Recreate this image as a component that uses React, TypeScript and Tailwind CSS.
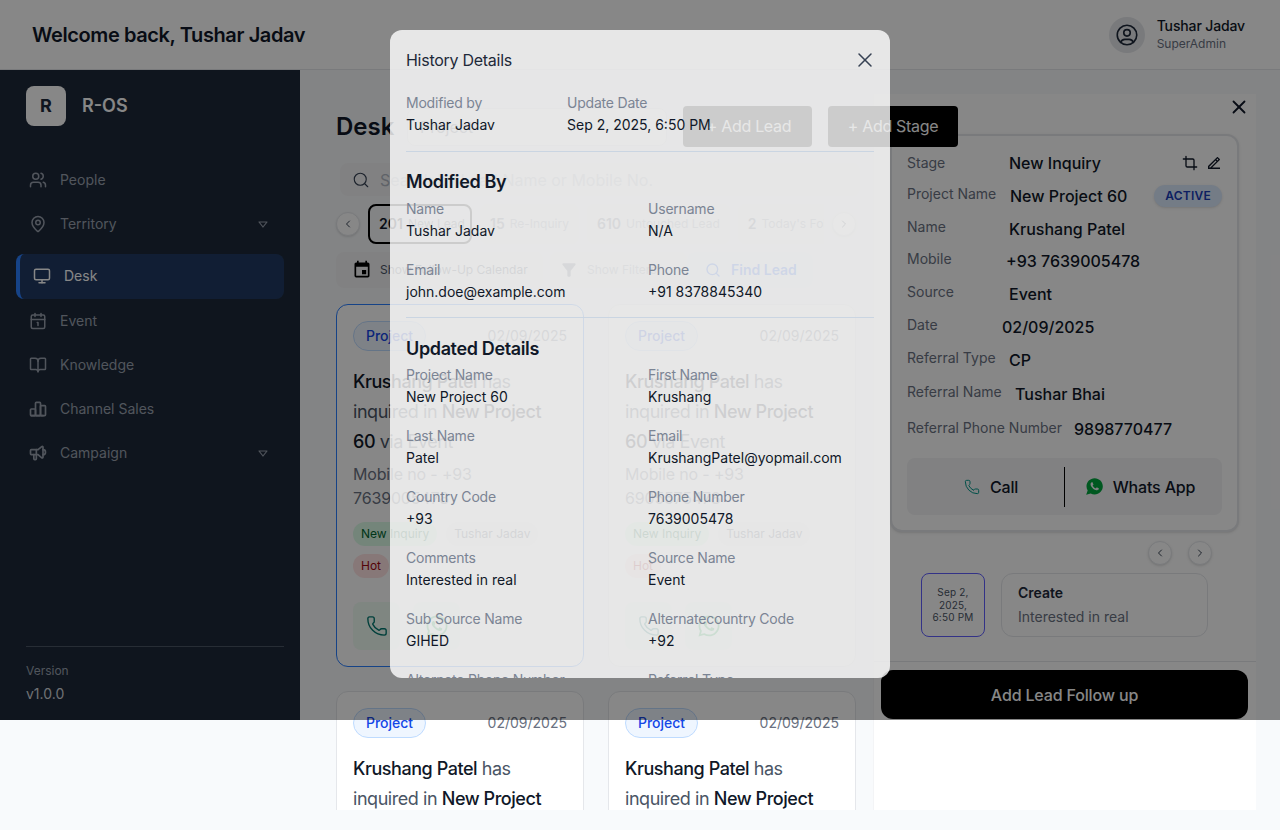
import {
  BookOpen,
  Calendar1,
  ChevronLeft,
  ChevronRight,
  Crop,
  MapPin,
  Monitor,
  Phone,
  Search,
  Users,
  X,
  type LucideIcon,
} from "lucide-react";
import { FaWhatsapp } from "react-icons/fa";
import { IoLogoWhatsapp } from "react-icons/io";
import { MdEvent, MdFilterAlt } from "react-icons/md";
import { RiEdit2Line } from "react-icons/ri";
import { TbChartBar, TbSpeakerphone, TbUserCircle } from "react-icons/tb";
import type { ComponentType } from "react";

interface NavItem {
  label: string;
  icon: LucideIcon | ComponentType<{ size?: number; className?: string }>;
  size: number;
  iconClass: string;
  caret?: boolean;
  active?: boolean;
}

const navItems: NavItem[] = [
  { label: "People", icon: Users, size: 18, iconClass: "shrink-0" },
  { label: "Territory", icon: MapPin, size: 18, iconClass: "shrink-0", caret: true },
  { label: "Desk", icon: Monitor, size: 18, iconClass: "shrink-0", active: true },
  { label: "Event", icon: Calendar1, size: 18, iconClass: "shrink-0" },
  { label: "Knowledge", icon: BookOpen, size: 18, iconClass: "shrink-0" },
  { label: "Channel Sales", icon: TbChartBar, size: 20, iconClass: "-mx-px shrink-0" },
  { label: "Campaign", icon: TbSpeakerphone, size: 20, iconClass: "-mx-px shrink-0", caret: true },
];

const tabs = [
  { count: "15", label: "Re-Inquiry" },
  { count: "610", label: "Untouched Lead" },
  { count: "2", label: "Today's Fol" },
];

const leadRows = [
  { label: "Stage", value: "New Inquiry", row: "h-[33px]", cell: "w-[102px]" },
  { label: "Project Name", value: "New Project 60", row: "h-[33px]", cell: "mb-1 w-[103px]" },
  { label: "Name", value: "Krushang Patel", row: "h-[33px]", cell: "mb-1 w-[102px]" },
  { label: "Mobile", value: "+93 7639005478", row: "h-[32px]", cell: "mb-1 w-[99px]" },
  { label: "Source", value: "Event", row: "h-[33px]", cell: "mb-1 w-[102px]" },
  { label: "Date", value: "02/09/2025", row: "h-[33px]", cell: "mb-1 w-[95px]" },
  { label: "Referral Type", value: "CP", row: "h-[33px]", cell: "mb-1 w-[102px]" },
  { label: "Referral Name", value: "Tushar Bhai", row: "h-[35px]", cell: "mb-1 w-[108px]" },
  { label: "Referral Phone Number", value: "9898770477", row: "h-[35px]", cell: "mb-0.5 w-[167px]" },
];

const modifiedBy = [
  { label: "Name", value: "Tushar Jadav" },
  { label: "Username", value: "N/A" },
  { label: "Email", value: "john.doe@example.com" },
  { label: "Phone", value: "+91 8378845340" },
];

const updatedDetails = [
  { label: "Project Name", value: "New Project 60" },
  { label: "First Name", value: "Krushang" },
  { label: "Last Name", value: "Patel" },
  { label: "Email", value: "KrushangPatel@yopmail.com" },
  { label: "Country Code", value: "+93" },
  { label: "Phone Number", value: "7639005478" },
  { label: "Comments", value: "Interested in real" },
  { label: "Source Name", value: "Event" },
  { label: "Sub Source Name", value: "GIHED" },
  { label: "Alternatecountry Code", value: "+92" },
  { label: "Alternate Phone Number", value: "9898770477" },
  { label: "Referral Type", value: "CP" },
];

function Field({ label, value }: { label: string; value: string }) {
  return (
    <div className="flex flex-col gap-0.5 text-sm leading-5">
      <span className="tracking-[-0.015em] text-[#7b8494]">{label}</span>
      <span className="text-gray-900">{value}</span>
    </div>
  );
}

function RoundButton({ icon: Icon }: { icon: LucideIcon }) {
  return (
    <button className="flex h-6 w-6 shrink-0 items-center justify-center rounded-full border border-gray-200 bg-white shadow-sm">
      <Icon size={12} className="text-gray-700" />
    </button>
  );
}

function Caret() {
  return (
    <svg width="10" height="7" viewBox="0 0 10 7" className="mr-[3px]" fill="none">
      <path d="M1 1h8L5 6z" stroke="currentColor" strokeWidth="1.2" strokeLinejoin="round" />
    </svg>
  );
}

function Sidebar() {
  return (
    <aside className="flex h-[650px] w-[300px] shrink-0 flex-col bg-gray-800">
      <div className="flex items-center gap-4 px-[26px] pt-4">
        <div className="flex h-10 w-10 items-center justify-center rounded-lg bg-white text-lg font-bold text-gray-800">
          R
        </div>
        <span className="text-lg font-semibold text-white">R-OS</span>
      </div>
      <nav className="mt-8 flex flex-col px-4">
        {navItems.map((item) => {
          const Icon = item.icon;
          return (
            <div
              key={item.label}
              className={
                item.active
                  ? "mt-2 flex h-[45px] items-center gap-[13px] rounded-lg border-l-4 border-blue-500 bg-blue-500/20 pb-px pl-[13px] text-sm text-white"
                  : "flex h-11 items-center gap-[13px] px-[13px] text-sm text-gray-400"
              }
            >
              <Icon size={item.size} className={item.iconClass} />
              <span className="flex-1">{item.label}</span>
              {item.caret && <Caret />}
            </div>
          );
        })}
      </nav>
      <div className="ml-[26px] mr-4 mt-auto h-[74px] border-t border-gray-600 pt-4">
        <div className="text-xs leading-4 text-gray-400">Version</div>
        <div className="mt-[5px] text-sm leading-5 text-gray-300">v1.0.0</div>
      </div>
    </aside>
  );
}

function LeadCard({ mobile, selected }: { mobile: string; selected?: boolean }) {
  return (
    <div
      className={
        selected
          ? "rounded-xl border border-blue-500 bg-white px-4 py-4"
          : "rounded-xl border border-gray-200 bg-white px-4 py-4"
      }
    >
      <div className="flex items-center justify-between">
        <span className="flex h-[30px] w-[73px] items-center justify-center rounded-full border border-blue-200 bg-blue-50 text-sm font-medium text-blue-700">
          Project
        </span>
        <span className="text-sm text-gray-500">02/09/2025</span>
      </div>
      <p className="mt-4 text-lg leading-[30px] tracking-tight text-gray-600">
        <span className="font-medium text-gray-900">Krushang Patel</span> has inquired in{" "}
        <span className="font-medium text-gray-900">New Project 60</span> via Event
      </p>
      <p className="mt-[5px] text-base leading-6 tracking-[-0.01em] text-gray-500">Mobile no - +93 {mobile}</p>
      <div className="mt-3 flex flex-wrap gap-x-[9px] gap-y-2 text-xs leading-6">
        <span className="rounded-full bg-green-100 px-2 text-green-800">New Inquiry</span>
        <span className="rounded-full bg-gray-100 px-2 text-gray-600">Tushar Jadav</span>
        <span className="rounded-full bg-red-100 px-2 text-red-800">Hot</span>
      </div>
      <div className="mt-6 flex gap-[13px]">
        <button className="flex h-12 w-[47px] items-center justify-center rounded-lg bg-green-50">
          <Phone size={22} strokeWidth={1.5} className="text-teal-700" />
        </button>
        <button className="flex h-12 w-[47px] items-center justify-center rounded-lg bg-green-50">
          <FaWhatsapp size={24} className="text-green-600" />
        </button>
      </div>
    </div>
  );
}

function DeskColumn() {
  return (
    <main className="ml-9 w-[520px] shrink-0 pt-9">
      <div className="relative z-10 flex h-[41px] w-[622px] items-center">
        <h1 className="w-[71px] text-2xl font-semibold text-gray-900">Desk</h1>
        <div className="flex h-[38px] w-[260px] items-center rounded-lg border border-gray-200 bg-white px-3 text-base text-gray-500">
          Project
        </div>
        <button className="ml-4 h-[41px] w-[129px] rounded bg-black pb-0.5 pl-[3px] text-base tracking-[-0.02em] text-white">
          + Add Lead
        </button>
        <button className="ml-4 h-[41px] w-[130px] rounded bg-black pb-0.5 text-base tracking-[-0.02em] text-white">
          + Add Stage
        </button>
      </div>
      <div className="ml-1 mt-4 flex h-[33px] w-[520px] items-center gap-2.5 rounded-lg bg-gray-100 px-3">
        <Search size={18} strokeWidth={1.5} className="text-gray-700" />
        <span className="text-base text-[#b4bac4]">Search by Lead Name or Mobile No.</span>
      </div>
      <div className="mt-2 flex h-10 items-center gap-2">
        <RoundButton icon={ChevronLeft} />
        <div className="flex h-10 w-[104px] shrink-0 items-center gap-[5px] rounded-lg border-2 border-black pl-[9px]">
          <span className="text-sm font-semibold text-gray-900">201</span>
          <span className="text-xs text-gray-500">New Lead</span>
        </div>
        <div className="flex flex-1 gap-2 overflow-hidden">
          {tabs.map((tab) => (
            <div
              key={tab.label}
              className="flex h-10 shrink-0 items-center gap-[5px] rounded-lg bg-gray-100 px-2.5"
            >
              <span className="text-sm font-semibold text-gray-500">{tab.count}</span>
              <span className="text-xs text-gray-400">{tab.label}</span>
            </div>
          ))}
        </div>
        <RoundButton icon={ChevronRight} />
      </div>
      <div className="mt-2 flex h-9 items-center">
        <div className="flex h-9 w-[207px] items-center gap-2 rounded-lg bg-gray-100 pl-4">
          <MdEvent size={20} className="text-black" />
          <span className="text-xs text-gray-600">Show Follow-Up Calendar</span>
        </div>
        <div className="ml-[7px] flex h-9 w-[137px] items-center gap-2 rounded-lg bg-gray-100 pl-[9px]">
          <MdFilterAlt size={20} className="text-gray-500" />
          <span className="text-xs text-gray-400">Show Filters</span>
        </div>
        <div className="flex h-9 w-[126px] items-center gap-2.5 rounded-lg bg-blue-50 pl-[18px]">
          <Search size={16} className="text-blue-600" />
          <span className="text-sm font-semibold text-blue-600">Find Lead</span>
        </div>
      </div>
      <div className="mt-4 grid grid-cols-[248px_248px] gap-6">
        <LeadCard mobile="7639005478" selected />
        <LeadCard mobile="6905575478" />
        <LeadCard mobile="7639005478" />
        <LeadCard mobile="6905575478" />
      </div>
    </main>
  );
}

function LeadPanel() {
  return (
    <section className="ml-[17px] mt-6 flex h-[716px] w-[383px] shrink-0 flex-col border-l border-gray-100 bg-white">
      <div className="flex justify-end pr-1.5 pt-0.5">
        <X size={22} className="text-gray-900" />
      </div>
      <div className="ml-4 mr-[17px] mt-4 rounded-xl border-2 border-gray-200 bg-white px-[15px] pb-[15px] pt-[10px] shadow-sm">
        {leadRows.map((row, index) => (
          <div key={row.label} className={`relative flex items-center ${row.row}`}>
            <span className={`shrink-0 text-sm text-gray-500 ${row.cell}`}>{row.label}</span>
            <span className="text-base font-medium text-gray-900">{row.value}</span>
            {index === 0 && (
              <span className="ml-auto flex gap-2 text-gray-900">
                <Crop size={16} />
                <RiEdit2Line size={16} />
              </span>
            )}
            {index === 1 && (
              <span className="ml-auto rounded-full bg-blue-100 px-[11px] py-[3px] text-xs font-semibold tracking-[0.02em] text-blue-800 shadow-sm">
                ACTIVE
              </span>
            )}
          </div>
        ))}
        <div className="mt-3 flex h-[57px] items-center rounded-lg bg-gray-100 text-base font-medium tracking-[-0.01em] text-gray-900">
          <div className="flex w-[157px] shrink-0 items-center justify-center gap-2.5 pl-[11px]">
            <Phone size={16} className="text-teal-600" strokeWidth={1.5} />
            Call
          </div>
          <div className="h-10 w-px bg-black" />
          <div className="flex flex-1 items-center justify-center gap-[9px] pr-[7px]">
            <IoLogoWhatsapp size={19} className="text-green-600" />
            Whats App
          </div>
        </div>
      </div>
      <div className="mt-[9px] flex gap-4 pl-[274px]">
        <RoundButton icon={ChevronLeft} />
        <RoundButton icon={ChevronRight} />
      </div>
      <div className="ml-[47px] mt-2 flex gap-4">
        <div className="flex h-16 w-16 items-center justify-center rounded-lg border border-indigo-500 text-center text-[10px] leading-[12.5px] tracking-[0.02em] text-gray-600">
          Sep 2,
          <br />
          2025,
          <br />
          6:50 PM
        </div>
        <div className="flex h-16 w-[207px] flex-col justify-center rounded-xl border border-gray-200 px-4">
          <span className="text-sm font-semibold leading-5 text-gray-800">Create</span>
          <span className="mt-1 text-sm leading-5 text-gray-500">Interested in real</span>
        </div>
      </div>
      <div className="mt-6 border-t border-gray-200 pt-2">
        <button className="ml-[7px] h-[49px] w-[367px] rounded-xl bg-black text-base font-medium tracking-[-0.01em] text-white">
          Add Lead Follow up
        </button>
      </div>
    </section>
  );
}

function HistoryModal() {
  return (
    <div className="absolute left-[390px] top-[30px] z-30 h-[648px] w-[500px] overflow-hidden rounded-xl bg-white/80 px-4">
      <div className="flex h-[60px] items-center justify-between">
        <h2 className="text-base tracking-[-0.017em] text-gray-800">History Details</h2>
        <X size={24} strokeWidth={1.5} className="-mr-[3px] text-gray-700" />
      </div>
      <div className="grid grid-cols-[161px_1fr] pt-[3px]">
        <Field label="Modified by" value="Tushar Jadav" />
        <Field label="Update Date" value="Sep 2, 2025, 6:50 PM" />
      </div>
      <div className="mt-4 border-t border-slate-300" />
      <h3 className="mt-4 text-lg font-semibold leading-7 tracking-[-0.02em] text-gray-900">Modified By</h3>
      <div className="mt-[3px] grid grid-cols-2 gap-x-4 gap-y-[19px]">
        {modifiedBy.map((field) => (
          <Field key={field.label} {...field} />
        ))}
      </div>
      <div className="mt-[15px] border-t border-slate-300" />
      <h3 className="mt-[17px] text-lg font-semibold leading-7 tracking-[-0.02em] text-gray-900">Updated Details</h3>
      <div className="mt-0.5 grid grid-cols-2 gap-x-4 gap-y-[19px]">
        {updatedDetails.map((field) => (
          <Field key={field.label} {...field} />
        ))}
      </div>
    </div>
  );
}

export default function App() {
  return (
    <div className="relative h-[830px] w-[1280px] overflow-hidden bg-slate-50 font-[Inter,sans-serif]">
      <header className="flex h-[70px] items-center justify-between border-b border-gray-200 bg-white pl-8 pr-[35px] pt-px">
        <h1 className="text-xl font-semibold tracking-[-0.02em] text-gray-900">Welcome back, Tushar Jadav</h1>
        <div className="flex items-center gap-3">
          <div className="flex h-9 w-9 items-center justify-center rounded-full bg-gray-200">
            <TbUserCircle size={26} strokeWidth={1.5} className="text-gray-800" />
          </div>
          <div className="mb-0.5 flex flex-col">
            <span className="text-sm font-medium leading-5 tracking-[-0.01em] text-gray-900">Tushar Jadav</span>
            <span className="text-xs leading-4 text-gray-500">SuperAdmin</span>
          </div>
        </div>
      </header>
      <div className="flex h-[740px] items-start overflow-hidden">
        <Sidebar />
        <DeskColumn />
        <LeadPanel />
      </div>
      <div className="absolute inset-x-0 top-0 z-20 h-[720px] bg-black/[0.47]" />
      <HistoryModal />
    </div>
  );
}
